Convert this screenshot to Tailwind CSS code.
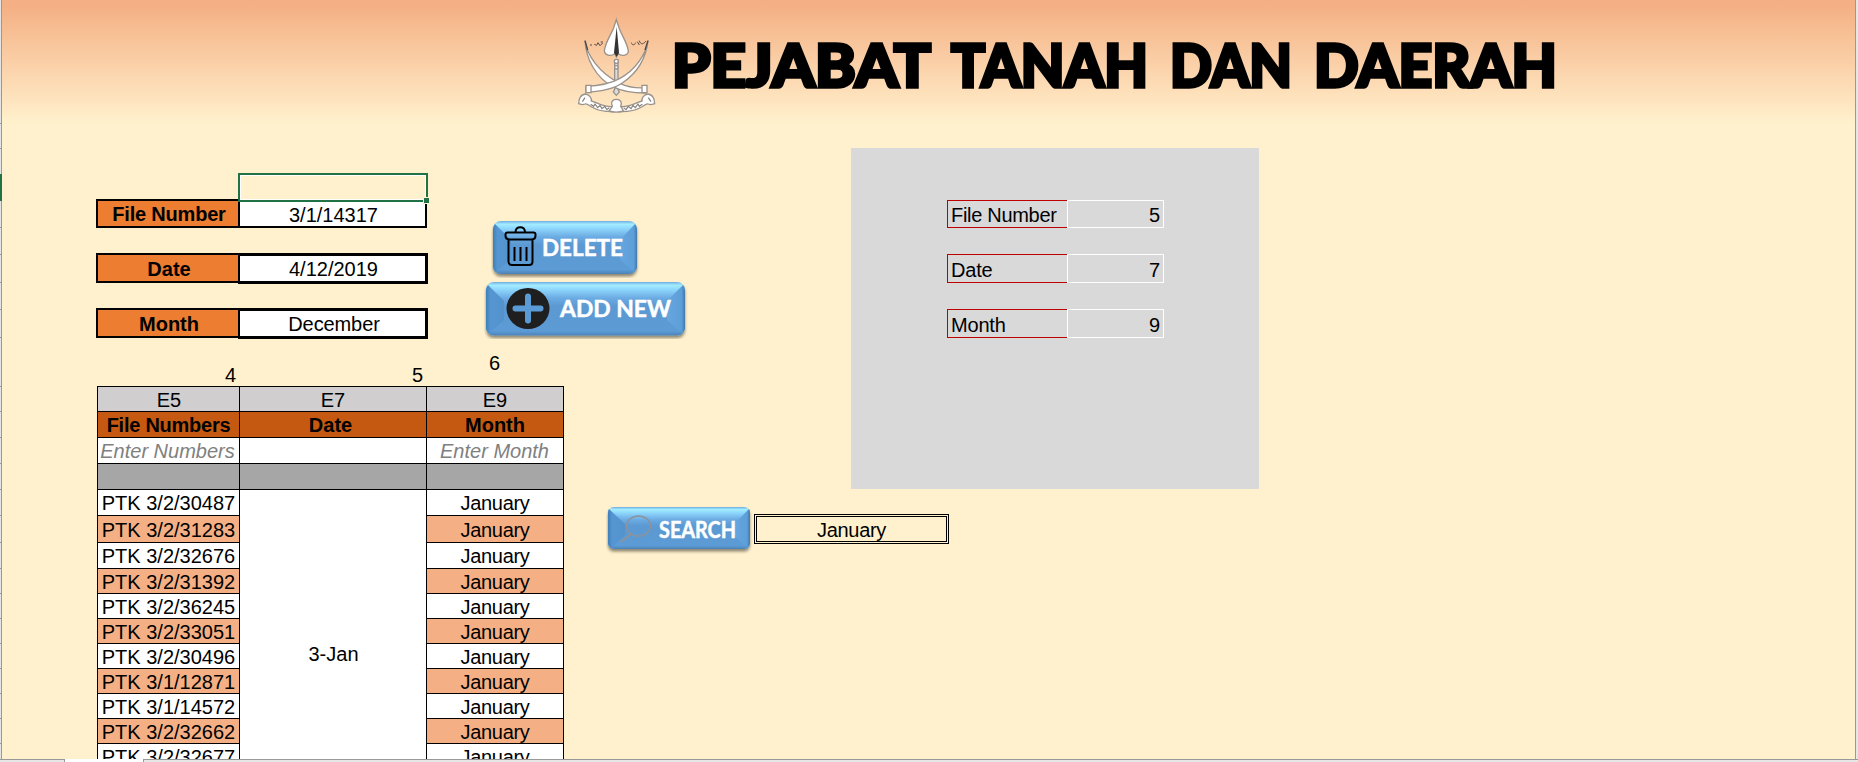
<!DOCTYPE html>
<html lang="ms">
<head>
<meta charset="utf-8">
<title>Pejabat Tanah dan Daerah</title>
<script src="https://cdn.jsdelivr.net/npm/@tailwindcss/browser@4"></script>
</head>
<body class="w-[1858px] h-[762px] overflow-hidden bg-[#fff1cd] text-black text-[20px] leading-[27px] font-['Liberation_Sans',Arial,sans-serif]">
<div class="flex flex-col h-[762px]">
<div class="flex h-[759px] overflow-hidden">

  <!-- row header edge -->
  <div class="w-[2px] shrink-0 bg-[#e4e4e4] border-r border-[#999]">
    <div class="h-[124px] border-b border-[#999]"></div>
    <div class="h-[25px] border-b border-[#999]"></div>
    <div class="h-[25px]"></div>
    <div class="h-[27px] w-[2px] bg-[#217346]"></div>
    <div class="h-[27px] border-b border-[#999]"></div>
    <div class="h-[27px] border-b border-[#999]"></div>
    <div class="h-[28px] border-b border-[#999]"></div>
    <div class="h-[27px] border-b border-[#999]"></div>
    <div class="h-[28px] border-b border-[#999]"></div>
    <div class="h-[49px] border-b border-[#999]"></div>
    <div class="h-[25px] border-b border-[#999]"></div>
    <div class="h-[26px] border-b border-[#999]"></div>
    <div class="h-[26px] border-b border-[#999]"></div>
    <div class="h-[26px] border-b border-[#999]"></div>
    <div class="h-[26px] border-b border-[#999]"></div>
    <div class="h-[27px] border-b border-[#999]"></div>
    <div class="h-[26px] border-b border-[#999]"></div>
    <div class="h-[25px] border-b border-[#999]"></div>
    <div class="h-[25px] border-b border-[#999]"></div>
    <div class="h-[25px] border-b border-[#999]"></div>
    <div class="h-[25px] border-b border-[#999]"></div>
    <div class="h-[25px] border-b border-[#999]"></div>
    <div class="h-[25px] border-b border-[#999]"></div>
    <div class="h-[25px] border-b border-[#999]"></div>
  </div>

  <div class="w-[1853px] shrink-0">
    <header class="flex h-[123px] pl-[568px] pt-[10px] bg-linear-to-b from-[#f4b084] from-5% to-[#fff1cd]">
      <svg class="shrink-0 w-[95px] h-[115px]" viewBox="0 0 285 345" fill="#fff" stroke="#9a928b" stroke-width="4">
        <path d="M134 150h10v88l4 8-9 10-9-10 4-8z" fill="#ddd"/>
        <circle cx="139" cy="154" r="6"/><circle cx="139" cy="172" r="5"/>
        <path d="M45 92C50 135 88 190 150 220c24 12 45 15 78 13v16c-38 0-70-3-101-20C76 202 48 145 45 92z"/>
        <path d="M234 92C229 140 208 180 158 213c-32 21-62 28-110 16v18c48 3 82-8 108-27 42-30 74-74 78-128z" stroke="none" fill="none"/>
        <path d="M234 92C229 132 196 180 150 205c-30 17-60 22-102 24v18c44-2 82-8 112-30 40-28 68-72 74-125z"/>
        <path d="M48 226h15v22H48zM216 226h15v22h-15z"/>
        <path d="M139 29l-9 27c-10 23-23 40-27 66 1 14 19 18 31 9l5 10 5-10c13 9 31 5 31-9-5-26-18-43-27-66z"/>
        <path d="M140 50l7 78-7 12-8-12z" fill="#333" stroke="none"/>
        <path d="M45 92l8 28M234 92l-9 28" stroke="#4d4540" stroke-width="4"/>
        <path d="M60 105h6M73 103l7 3 4-8 6 9 8-8M92 96h7M184 98c2 8 9 9 13 0M202 95l6 10M208 92c4 15 14 9 20 1" fill="none" stroke="#564b45" stroke-width="3"/>
        <path d="M26 281c0-17 7-27 20-29 13 2 19 12 18 21l14 5c17 8 33 12 47 12v15c-27 0-44-5-60-14-8-5-15-12-20-9-9 4-11 1-19-1z"/>
        <path d="M254 281c0-17-7-27-20-29-13 2-19 12-18 21l-14 5c-17 8-33 12-47 12v15c27 0 44-5 60-14 8-5 15-12 20-9 9 4 11 1 19-1z"/>
        <path d="M125 281c-2-17 28-17 29 0l-2 8 9 14c-13 4-32 4-44 0l10-14z"/>
        <path d="M45 263l-8 12M235 263l8 12M62 283l9 6 4-7 8 11 7-7 6 10 8-7 7 10 7-6M217 283l-9 6-4-7-8 11-7-7-6 10-8-7-7 10-7-6" fill="none" stroke="#88817b" stroke-width="3.500"/>
      </svg>
      <h1 class="shrink-0 font-['Lato']">
        <svg class="w-[900px] h-[100px] font-black overflow-visible" viewBox="0 0 900 100" font-size="59" stroke="#000" stroke-width="3.500">
          <text x="7" y="76.500" textLength="259" lengthAdjust="spacingAndGlyphs">PEJABAT</text>
          <text x="286" y="76.500" textLength="197" lengthAdjust="spacingAndGlyphs">TANAH</text>
          <text x="505" y="76.500" textLength="122" lengthAdjust="spacingAndGlyphs">DAN</text>
          <text x="649" y="76.500" textLength="243" lengthAdjust="spacingAndGlyphs">DAERAH</text>
        </svg>
      </h1>
    </header>

    <main class="flex h-[636px]">
      <div class="w-[562px] shrink-0">
        <div class="flex h-[263px] pl-[94px]">
          <!-- entry form -->
          <div class="w-[332px] shrink-0 pt-[50px]">
            <div class="relative z-10 ml-[142px] h-[29px] w-[190px] border-2 border-[#217346]">
              <div class="h-[25px] border border-white"></div>
              <div class="absolute -right-[4px] -bottom-[4px] w-[7px] h-[7px] bg-[#217346] border border-[#fff1cd]"></div>
            </div>
            <div class="flex -mt-[3px] h-[29px] w-[331px] border-2 border-black text-center">
              <div class="w-[142px] border-r-2 border-black bg-[#ed7d31] pl-[2px] font-bold leading-[26px] tracking-[-0.2px]">File Number</div>
              <div class="flex-1 bg-white pl-[2px] leading-[28px]">3/1/14317</div>
            </div>
            <div class="flex mt-[25px] h-[31px] text-center">
              <div class="w-[142px] h-[30px] border-2 border-r-0 border-black bg-[#ed7d31] pl-[2px] font-bold leading-[28px]">Date</div>
              <div class="w-[190px] border-3 border-l-2 border-black bg-white pl-[2px] leading-[27px]">4/12/2019</div>
            </div>
            <div class="flex mt-[24px] h-[31px] text-center">
              <div class="w-[142px] h-[30px] border-2 border-r-0 border-black bg-[#ed7d31] pl-[2px] font-bold leading-[28px]">Month</div>
              <div class="w-[190px] border-3 border-l-2 border-black bg-white pl-[3px] leading-[27px] tracking-[-0.1px]">December</div>
            </div>
            <div class="flex mt-[23px] text-right">
              <div class="w-[140px]">4</div>
              <div class="w-[187px]">5</div>
            </div>
          </div>
          <!-- actions -->
          <div class="shrink-0 w-[212px] pl-[56px] pt-[94px]">
            <button class="block ml-[7px] w-[152px] h-[61px]">
              <svg class="w-[152px] h-[61px] font-['Lato'] font-bold" viewBox="0 0 152 61">
                <defs>
                  <linearGradient id="face" x1="0" y1="0" x2="0" y2="1"><stop offset="0" stop-color="#6faee2"/><stop offset=".06" stop-color="#a3ecff"/><stop offset=".12" stop-color="#92dcff"/><stop offset=".3" stop-color="#6cabe3"/><stop offset=".45" stop-color="#5b99d2"/><stop offset=".92" stop-color="#5b9bd5"/><stop offset="1" stop-color="#4c83b8"/></linearGradient>
                  <linearGradient id="lside" x1="0" y1="0" x2="1" y2="0"><stop offset="0" stop-color="#3f7fb8"/><stop offset=".25" stop-color="#5596d2"/><stop offset="1" stop-color="#5392cc"/></linearGradient>
                  <linearGradient id="rside" x1="0" y1="0" x2="1" y2="0"><stop offset="0" stop-color="#66a6df"/><stop offset=".8" stop-color="#5d9fd9"/><stop offset="1" stop-color="#4279ac"/></linearGradient>
                  <filter id="drop" x="-10%" y="-10%" width="120%" height="140%"><feDropShadow dx="0" dy="2.5" stdDeviation="1.8" flood-color="#000" flood-opacity=".45"/></filter>
                </defs>
                <rect x="2" y="4" width="144" height="53" rx="8" fill="url(#face)" filter="url(#drop)"/>
                <path d="M4 7L20 23V42L5 55Q2 53 2 49V12Q2 9 4 7z" fill="url(#lside)"/>
                <path d="M144 7L129 23V42L143 55Q146 53 146 49V12Q146 9 144 7z" fill="url(#rside)"/>
                <g transform="translate(2 4)" fill="none" stroke="#000" stroke-width="2">
                  <path d="M14.500 11.500h26q2 0 2 2v1q0 4-4 4h-22q-4 0-4-4v-1q0-2 2-2zM22.500 11c0-6.500 9.500-6.500 9.500 0M15.500 19v21.500q0 3.500 3.500 3.500h17q3.500 0 3.500-3.500v-21.500M21.500 26v14M27.500 26v14M33.500 26v14"/>
                </g>
                <text x="51" y="38.500" font-size="23.500" fill="#fff" stroke="#fff" stroke-width=".5" textLength="81" lengthAdjust="spacingAndGlyphs">DELETE</text>
              </svg>
            </button>
            <button class="block w-[206px] h-[61px]">
              <svg class="w-[206px] h-[61px] font-['Lato'] font-bold" viewBox="0 0 206 61">
                <rect x="2" y="4" width="199" height="53.500" rx="8" fill="url(#face)" filter="url(#drop)"/>
                <path d="M4 7L20 23V42L5 55Q2 53 2 49V12Q2 9 4 7z" fill="url(#lside)"/>
                <path d="M199 7L183 23V42L198 55Q201 53 201 49V12Q201 9 199 7z" fill="url(#rside)"/>
                <ellipse cx="44" cy="30.500" rx="21.500" ry="20.500" fill="#1f1f1f"/>
                <path d="M44 18.500v24M31.500 30.500h25" stroke="#5b9bd5" stroke-width="6" stroke-linecap="round"/>
                <text x="76" y="38.500" font-size="23.500" fill="#fff" stroke="#fff" stroke-width=".5" textLength="111" lengthAdjust="spacingAndGlyphs">ADD NEW</text>
              </svg>
            </button>
            <div class="mt-[11px] pl-[5px]">6</div>
          </div>
        </div>

        <!-- file table -->
        <div class="ml-[95px] w-[467px] border-l border-t border-black text-center">
          <div class="flex h-[25px]">
            <div class="w-[142px] border-r border-b border-black bg-[#d0cece] pl-px">E5</div>
            <div class="w-[187px] border-r border-b border-black bg-[#d0cece]">E7</div>
            <div class="w-[137px] border-r border-b border-black bg-[#d0cece]">E9</div>
          </div>
          <div class="flex h-[26px] font-bold">
            <div class="w-[142px] border-r border-b border-black bg-[#c65911] tracking-[-0.25px]">File Numbers</div>
            <div class="w-[187px] border-r border-b border-black bg-[#c65911] pr-[5px]">Date</div>
            <div class="w-[137px] border-r border-b border-black bg-[#c65911]">Month</div>
          </div>
          <div class="flex h-[26px] italic text-[#808080]">
            <div class="w-[142px] border-r border-b border-black bg-white pr-[2px] whitespace-nowrap">Enter Numbers</div>
            <div class="w-[187px] border-r border-b border-black bg-white"></div>
            <div class="w-[137px] border-r border-b border-black bg-white pr-px">Enter Month</div>
          </div>
          <div class="flex h-[26px]">
            <div class="w-[142px] border-r border-b border-black bg-[#a6a6a6]"></div>
            <div class="w-[187px] border-r border-b border-black bg-[#a6a6a6]"></div>
            <div class="w-[137px] border-r border-b border-black bg-[#a6a6a6]"></div>
          </div>
          <div class="flex h-[269px] overflow-hidden">
            <div class="w-[142px] border-r border-black whitespace-nowrap">
              <div class="h-[26px] border-b border-black bg-white">PTK 3/2/30487</div>
              <div class="h-[27px] border-b border-black bg-[#f4b084] leading-[29px]">PTK 3/2/31283</div>
              <div class="h-[26px] border-b border-black bg-white">PTK 3/2/32676</div>
              <div class="h-[25px] border-b border-black bg-[#f4b084]">PTK 3/2/31392</div>
              <div class="h-[25px] border-b border-black bg-white">PTK 3/2/36245</div>
              <div class="h-[25px] border-b border-black bg-[#f4b084]">PTK 3/2/33051</div>
              <div class="h-[25px] border-b border-black bg-white">PTK 3/2/30496</div>
              <div class="h-[25px] border-b border-black bg-[#f4b084]">PTK 3/1/12871</div>
              <div class="h-[25px] border-b border-black bg-white">PTK 3/1/14572</div>
              <div class="h-[25px] border-b border-black bg-[#f4b084]">PTK 3/2/32662</div>
              <div class="h-[25px] bg-white">PTK 3/2/32677</div>
            </div>
            <div class="w-[187px] border-r border-black bg-white pl-px pt-[151px]">3-Jan</div>
            <div class="w-[137px] border-r border-black tracking-[-0.3px]">
              <div class="h-[26px] border-b border-black bg-white">January</div>
              <div class="h-[27px] border-b border-black bg-[#f4b084] leading-[29px]">January</div>
              <div class="h-[26px] border-b border-black bg-white">January</div>
              <div class="h-[25px] border-b border-black bg-[#f4b084]">January</div>
              <div class="h-[25px] border-b border-black bg-white">January</div>
              <div class="h-[25px] border-b border-black bg-[#f4b084]">January</div>
              <div class="h-[25px] border-b border-black bg-white">January</div>
              <div class="h-[25px] border-b border-black bg-[#f4b084]">January</div>
              <div class="h-[25px] border-b border-black bg-white">January</div>
              <div class="h-[25px] border-b border-black bg-[#f4b084]">January</div>
              <div class="h-[25px] bg-white">January</div>
            </div>
          </div>
        </div>
      </div>

      <div class="pt-[25px]">
        <!-- row lookup panel -->
        <section class="ml-[287px] w-[408px] h-[341px] bg-[#d9d9d9] pl-[96px] pt-[52px] flex flex-col">
          <div class="flex h-[28px]">
            <div class="w-[120px] border border-r-0 border-[#c00000] pl-[3px] leading-[28px] tracking-[-0.3px] whitespace-nowrap">File Number</div>
            <div class="w-[97px] border border-white pr-[3px] text-right leading-[28px]">5</div>
          </div>
          <div class="flex h-[29px] mt-[26px]">
            <div class="w-[120px] border border-r-0 border-[#c00000] pl-[3px] leading-[30px] tracking-[-0.2px]">Date</div>
            <div class="w-[97px] border border-white pr-[3px] text-right leading-[30px]">7</div>
          </div>
          <div class="flex h-[29px] mt-[26px]">
            <div class="w-[120px] border border-r-0 border-[#c00000] pl-[3px] leading-[30px] tracking-[-0.2px]">Month</div>
            <div class="w-[97px] border border-white pr-[3px] text-right leading-[30px]">9</div>
          </div>
        </section>
        <!-- search -->
        <div class="flex mt-[14px] ml-[42px]">
          <button class="block w-[148px] h-[52px]">
            <svg class="w-[148px] h-[52px] font-['Lato'] font-bold" viewBox="0 0 148 52">
              <rect x="2" y="4" width="142" height="42" rx="6" fill="url(#face)" filter="url(#drop)"/>
              <path d="M3 6L19 21V32L5 45Q2 43 2 40V10Q2 7 3 6z" fill="url(#lside)"/>
              <path d="M143 6L128 21V32L141 45Q144 43 144 40V10Q144 7 143 6z" fill="url(#rside)"/>
              <g fill="none" stroke="#8d929b" stroke-width="1.500"><ellipse cx="32.500" cy="23" rx="12" ry="10"/><path d="M25 31L15 39" stroke-width="2"/></g>
              <text x="53" y="35" font-size="22" fill="#fff" stroke="#fff" stroke-width=".5" textLength="77" lengthAdjust="spacingAndGlyphs">SEARCH</text>
            </svg>
          </button>
          <div class="mt-[11px] w-[195px] h-[30px] border-3 border-double border-black text-center leading-[26px] tracking-[-0.3px]">January</div>
        </div>
      </div>
    </main>
  </div>
  <div class="w-[3px] shrink-0 bg-[#e6e6e6] border-l border-[#999]"></div>
</div>
<!-- scrollbar edge -->
<div class="flex h-[3px]">
  <div class="w-[65px] bg-[#e6e6e6] border-t border-r border-[#999]"></div>
  <div class="w-[78px] bg-white"></div>
  <div class="flex-1 bg-[#e6e6e6] border-t border-l border-[#999]"></div>
</div>
</div>
</body>
</html>
